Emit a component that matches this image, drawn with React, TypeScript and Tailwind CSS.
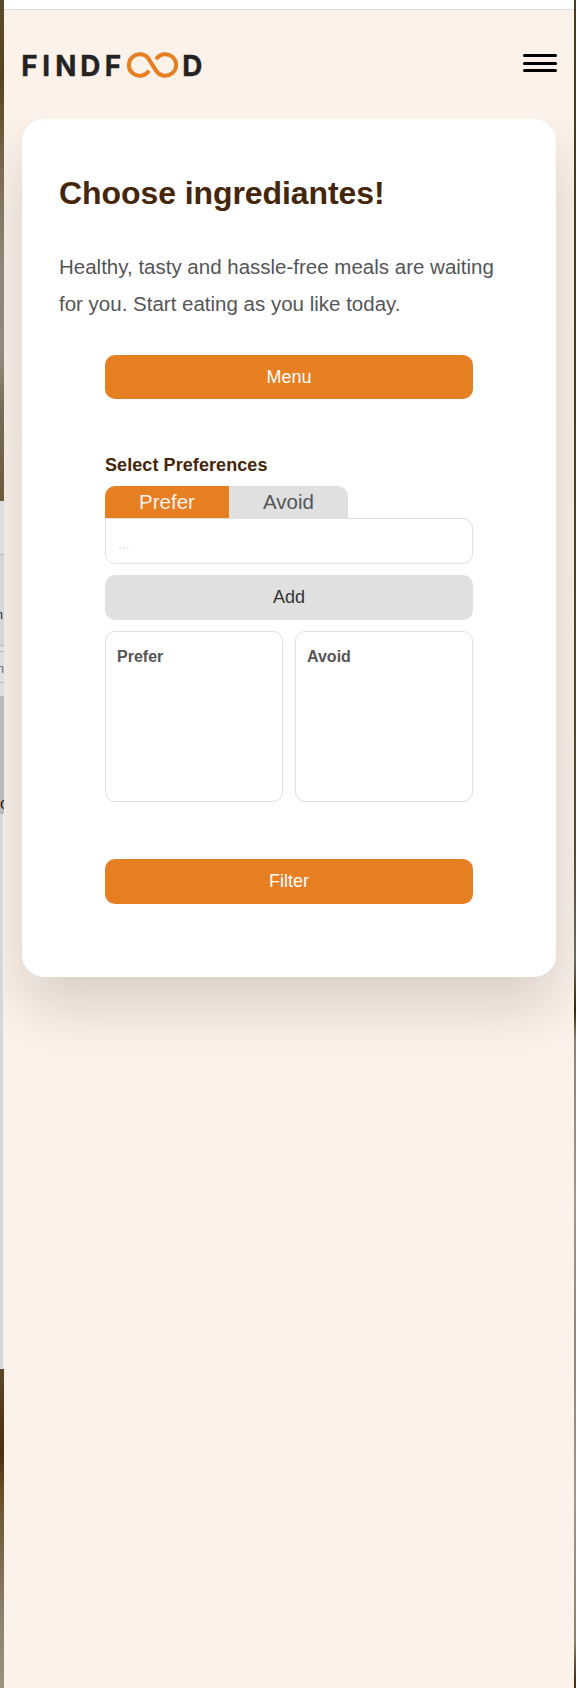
import React from "react";

function Logo() {
  return (
    <svg width="184" height="32" viewBox="0 0 184 32" role="img" aria-label="FINDFOOD">
      <g
        fill="#232323"
        stroke="#232323"
        strokeWidth="0.4"
        strokeLinejoin="round"
        fontFamily="Inter, sans-serif"
        fontWeight="700"
        fontSize="29"
        transform="scale(0.96 1)"
      >
        <text y="26.5" x="-0.8 21.2 34.6 60.7 86.2">FINDF</text>
        <text y="26.5" x="167">D</text>
      </g>
      <path
        d="M126.9 21.7A10.8 10.8 0 1 1 126.8 10.2L134.2 21.8A10.8 10.8 0 1 0 134.1 10.3"
        fill="none"
        stroke="#e67e22"
        strokeWidth="4"
      />
    </svg>
  );
}

function LeftBackdrop() {
  return (
    <div className="flex w-1 shrink-0 flex-col overflow-hidden font-['Liberation_Sans',sans-serif] text-[#222]">
      <div className="h-[501px] shrink-0 bg-[linear-gradient(#5a4a2e_0px,#57431f_80px,#7a6a54_170px,#8d8577_260px,#91897c_360px,#756b59_410px,#6b5a3c_500px)]" />
      <div className="h-[53px] shrink-0 bg-[#dcdedf]" />
      <div className="flex h-[92px] shrink-0 items-end justify-end border-y border-[#b9bbbc] bg-[#d4d7d9] pr-px pb-[24px] text-[12px] leading-none">n</div>
      <div className="h-[5px] shrink-0 bg-[#dcdedf]" />
      <div className="flex h-[32px] shrink-0 items-center justify-end border-y border-[#b9bbbc] bg-[#dcdedf] pt-[4px] text-[12px] leading-none text-[#667]">n</div>
      <div className="h-[13px] shrink-0 bg-[#dcdedf]" />
      <div className="flex h-[118px] shrink-0 items-end bg-[#b9b9b9] pb-[2px] text-[16px] leading-none">
        <span>o</span>
      </div>
      <div className="h-[555px] shrink-0 border-r border-[#eef0f1] bg-[#d6d7d9]" />
      <div className="h-[319px] shrink-0 bg-[linear-gradient(#5c462c_0px,#4f3516_60px,#4a3010_85px,#6b5028_125px,#75664c_180px,#8e8171_250px,#9c9183_319px)]" />
    </div>
  );
}

function Header() {
  return (
    <header className="relative z-10 flex h-[110px] shrink-0 items-center justify-between border-t border-[#dedede] bg-[#fdf2e9] pr-[17px] pl-[18px]">
      <Logo />
      <button className="mb-[3px] flex w-[34px] flex-col gap-[4.5px]" aria-label="Open navigation">
        <span className="h-[3px] rounded-full bg-black" />
        <span className="h-[3px] rounded-full bg-black" />
        <span className="h-[3px] rounded-full bg-black" />
      </button>
    </header>
  );
}

function Box({ title }: { title: string }) {
  return (
    <div className="h-[171px] flex-1 rounded-[10px] border border-[#e0e0e0] px-[11px] pt-[14px]">
      <h3 className="text-[16px] leading-[22px] font-bold text-[#555]">{title}</h3>
    </div>
  );
}

export default function App() {
  return (
    <div className="flex h-[1688px] w-full overflow-hidden font-['Liberation_Sans',Arial,sans-serif]">
      <LeftBackdrop />
      <div className="flex min-w-0 flex-1 flex-col overflow-hidden bg-[#fdf2e9]">
        <div className="h-[9px] shrink-0 bg-white" />
        <Header />
        <main className="mr-[18px] ml-[18px] h-[858px] rounded-[22px] bg-white px-[37px] pt-[52px] shadow-[0_30px_60px_rgba(0,0,0,0.15)]">
          <h1 className="text-[32px] leading-[44px] font-bold tracking-[-0.08px] text-[#45260a]">Choose ingrediantes!</h1>
          <p className="mt-[33px] text-[20.5px] leading-[37px] whitespace-nowrap text-[#555]">
            Healthy, tasty and hassle-free meals are waiting
            <br />
            for you. Start eating as you like today.
          </p>
          <div className="mr-[46px] ml-[46px] flex flex-col pt-[33px]">
            <button className="h-[44px] rounded-[10px] bg-[#e67e22] text-[18px] text-white">Menu</button>
            <h2 className="mt-[54px] text-[18px] leading-[24px] font-bold tracking-[0.08px] text-[#45260a]">Select Preferences</h2>
            <div className="mt-[9px] flex h-[32px] text-[20.5px] leading-[32px]">
              <button className="w-[124px] rounded-tl-[10px] bg-[#e67e22] text-[#fdf2e9]">Prefer</button>
              <button className="w-[119px] rounded-tr-[10px] bg-[#e0e0e0] text-[#555]">Avoid</button>
            </div>
            <input
              className="h-[46px] rounded-[10px] rounded-tl-none border border-[#e0e0e0] px-[12px] pt-[6px] text-[14px] text-[#555] placeholder:text-[#e0e0e0]"
              placeholder="..."
            />
            <button className="mt-[11px] h-[45px] rounded-[10px] bg-[#e0e0e0] text-[18px] text-[#333]">Add</button>
            <div className="mt-[11px] flex gap-3">
              <Box title="Prefer" />
              <Box title="Avoid" />
            </div>
            <button className="mt-[57px] h-[45px] rounded-[10px] bg-[#e67e22] text-[18px] text-white">Filter</button>
          </div>
        </main>
      </div>
      <div className="w-0.5 shrink-0 bg-[linear-gradient(#4a3c23_0px,#453a24_300px,#514a38_850px,#6d6b5c_960px,#30260d_1010px,#8b8475_1040px,#a09789_1200px,#8e8778_1350px,#a09789_1500px,#8b8170_1640px,#49311c_1680px)]" />
    </div>
  );
}
